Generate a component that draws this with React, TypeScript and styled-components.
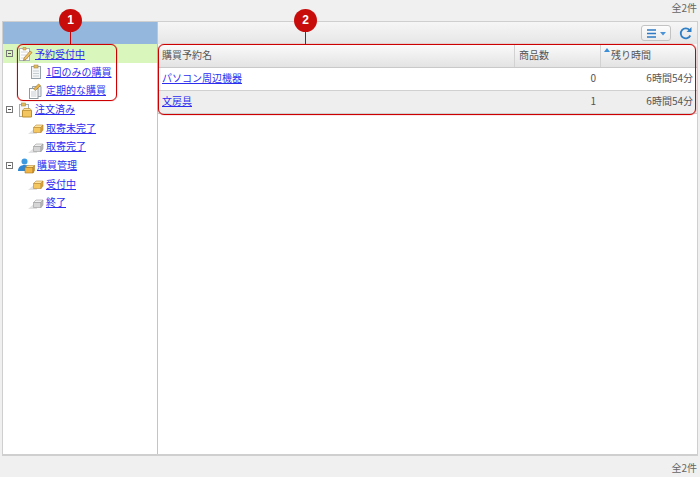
import { FC, ReactNode } from 'react';
import styled, { createGlobalStyle } from 'styled-components';

const GlobalStyle = createGlobalStyle`
  html, body {
    margin: 0;
    padding: 0;
    background: #f0f0f0;
  }
  body {
    font-family: 'Noto Sans CJK JP', 'Liberation Sans', sans-serif;
    font-size: 10px;
    color: #555;
  }
  a {
    color: #2d2df0;
    text-decoration: underline;
  }
`;

const Page = styled.div`
  position: relative;
  width: 700px;
  height: 477px;
  overflow: hidden;
  display: flex;
  flex-direction: column;
`;

const CountBar = styled.div<{ $height: number; $line: number }>`
  height: ${(p) => p.$height}px;
  line-height: ${(p) => p.$line}px;
  padding-right: 3px;
  text-align: right;
  color: #666;
  font-size: 10px;
`;

const Panel = styled.div`
  margin: 0 2px;
  height: 435px;
  box-sizing: border-box;
  border: 1px solid #cfcfcf;
  border-bottom-width: 2px;
  display: flex;
  background: #fff;
`;

const Sidebar = styled.div`
  width: 154px;
  flex: none;
  border-right: 1px solid #c4c4c4;
`;

const SidebarHead = styled.div`
  height: 22px;
  background: #94b7dd;
`;

const TreeList = styled.div`
  display: flex;
  flex-direction: column;
`;

const TreeRow = styled.div<{ $active?: boolean; $child?: boolean }>`
  height: ${(p) => (p.$active ? 19 : 18.65)}px;
  display: flex;
  align-items: center;
  padding-left: ${(p) => (p.$child ? 25 : 3)}px;
  background: ${(p) => (p.$active ? '#d9f6bd' : 'transparent')};
`;

const Toggle = styled.span`
  width: 7px;
  height: 7px;
  box-sizing: border-box;
  border: 1px solid #777;
  margin-right: 4px;
  flex: none;
  display: flex;
  align-items: center;
  justify-content: center;
  &::after {
    content: '';
    width: 3px;
    height: 1px;
    background: #555;
  }
`;

const IconBox = styled.span<{ $w: number }>`
  width: ${(p) => p.$w}px;
  height: 16px;
  flex: none;
  margin-right: 2px;
  display: block;
`;

const TreeLabel = styled.a<{ $active?: boolean }>`
  position: relative;
  top: ${(p) => (p.$active ? 0 : -1)}px;
`;

const Main = styled.div`
  flex: 1;
  display: flex;
  flex-direction: column;
  min-width: 0;
`;

const Toolbar = styled.div`
  height: 22px;
  flex: none;
  box-sizing: border-box;
  background: linear-gradient(#f6f6f6, #e6e6e6);
  display: flex;
  align-items: center;
  justify-content: flex-end;
  padding-right: 4px;
  gap: 7px;
`;

const MenuButton = styled.button`
  width: 30px;
  height: 16px;
  padding: 0 0 0 2px;
  border: 1px solid #c3c3c3;
  border-radius: 3px;
  background: linear-gradient(#fdfdfd, #ececec);
  display: flex;
  align-items: center;
  justify-content: center;
`;

const RefreshButton = styled.span`
  width: 15px;
  height: 15px;
  display: block;
`;

const Row = styled.div<{ $kind: 'head' | 'odd' | 'even' }>`
  display: grid;
  grid-template-columns: 357px 86px 1fr;
  height: ${(p) => (p.$kind === 'head' ? 24 : 23)}px;
  box-sizing: border-box;
  align-items: center;
  border-bottom: 1px solid ${(p) => (p.$kind === 'head' ? '#c9c9c9' : '#d0d0d0')};
  background: ${(p) =>
    p.$kind === 'head'
      ? 'linear-gradient(#fbfbfb, #e3e3e3)'
      : p.$kind === 'even'
        ? '#eeeeee'
        : '#fff'};
`;

const Cell = styled.div<{ $right?: boolean; $divider?: boolean; $sorted?: boolean; $endPad?: number }>`
  height: 100%;
  box-sizing: border-box;
  display: flex;
  align-items: center;
  padding: 0 ${(p) => p.$endPad ?? 4}px 3px ${(p) => (p.$sorted ? 10 : 4)}px;
  position: relative;
  justify-content: ${(p) => (p.$right ? 'flex-end' : 'flex-start')};
  border-right: ${(p) => (p.$divider ? '1px solid #d2d2d2' : 'none')};
  color: #555;
`;

const SortArrow = styled.span`
  position: absolute;
  left: 3px;
  top: 4px;
  width: 0;
  height: 0;
  border-left: 3.5px solid transparent;
  border-right: 3.5px solid transparent;
  border-bottom: 4px solid #3a8fd8;
`;

const Callout = styled.div<{ $x: number; $y: number; $w: number; $h: number }>`
  position: absolute;
  left: ${(p) => p.$x}px;
  top: ${(p) => p.$y}px;
  width: ${(p) => p.$w}px;
  height: ${(p) => p.$h}px;
  box-sizing: border-box;
  border: 1px solid #cc0000;
  box-shadow: 0 0 1px #cc0000;
  border-radius: 6px;
  pointer-events: none;
`;

const Badge = styled.div<{ $x: number }>`
  position: absolute;
  left: ${(p) => p.$x}px;
  top: 9px;
  width: 23px;
  height: 23px;
  border-radius: 50%;
  background: #c80c0c;
  color: #fff;
  font-family: 'Liberation Sans', sans-serif;
  font-weight: bold;
  font-size: 12px;
  line-height: 23px;
  text-align: center;
  &::after {
    content: '';
    position: absolute;
    left: 11px;
    top: 23px;
    width: 1px;
    height: 12px;
    background: #cc0000;
  }
`;

const NoteIcon: FC = () => (
  <svg width="16" height="16" viewBox="0 0 16 16">
    <rect x="2.5" y="2.5" width="10" height="12" fill="#fff" stroke="#aab2b8" />
    <path d="M4 6h7M4 9h5M4 12h7" stroke="#d2d6d9" />
    <path d="M6 4V1.5h3V4z" fill="#e9bf5c" stroke="#b98f30" strokeWidth=".6" />
    <path d="M7 12l6-7 2 1.500-6 7-2.500 1z" fill="#f0c060" stroke="#8f6a2a" strokeWidth=".6" />
  </svg>
);

const ClipIcon: FC = () => (
  <svg width="16" height="16" viewBox="0 0 16 16">
    <rect x="3.500" y="2.500" width="9" height="12" fill="#f4f6f7" stroke="#97a3aa" />
    <path d="M5 7h6M5 9.500h6M5 12h6" stroke="#c7ced2" />
    <rect x="6" y="1" width="4" height="3" fill="#e3bd62" stroke="#a98a3c" strokeWidth=".6" />
  </svg>
);

const RegularIcon: FC = () => (
  <svg width="16" height="16" viewBox="0 0 16 16">
    <path d="M4.500 3.500h8.500v10H4.500z" fill="#e8eaec" stroke="#9aa4ab" />
    <rect x="1.500" y="5.500" width="8.500" height="10" fill="#fff" stroke="#8f9aa1" />
    <path d="M3 9h5.500M3 11h5.500M3 13h5.500" stroke="#c4cbd0" />
    <path d="M5.500 6l5-5 2 1.500-5 5z" fill="#e9b44c" stroke="#9a7326" strokeWidth=".6" />
  </svg>
);

const OrderedIcon: FC = () => (
  <svg width="16" height="16" viewBox="0 0 16 16">
    <rect x="2.500" y="2.500" width="9" height="12" fill="#f6f7f8" stroke="#a3adb3" />
    <rect x="4.500" y="1" width="4" height="3" fill="#e3bd62" stroke="#a98a3c" strokeWidth=".6" />
    <path d="M5.500 8.500h9V15h-9z" fill="#f3c55f" stroke="#bd8f2e" />
    <path d="M5.500 8.500l1.500-2h6l1.500 2z" fill="#fbe09a" stroke="#bd8f2e" strokeWidth=".7" />
  </svg>
);

const BoxIcon: FC<{ $done?: boolean }> = ({ $done }) => {
  const [top, front, side, line] = $done
    ? ['#eeeeee', '#d6d6d6', '#bdbdbd', '#9a9a9a']
    : ['#fde3a0', '#f5c760', '#dfa23a', '#b98a30'];
  return (
    <svg width="16" height="16" viewBox="0 0 16 16">
      <path d="M0 14l7-6h2v6z" fill="#e2e2e2" />
      <path d="M5.500 7.500h7.500l2-2.500H8z" fill={top} stroke={line} strokeWidth=".6" />
      <path d="M5.500 7.500h7.500v5H5.500z" fill={front} stroke={line} strokeWidth=".6" />
      <path d="M13 7.500l2-2.500v5l-2 2.500z" fill={side} stroke={line} strokeWidth=".6" />
    </svg>
  );
};

const ManageIcon: FC = () => (
  <svg width="18" height="16" viewBox="0 0 18 16">
    <circle cx="7.500" cy="3.500" r="3" fill="#3d9ae0" />
    <path d="M1 13c0-4 3-6 6.500-6S13 8 13 10v3z" fill="#2f86d2" />
    <path d="M8 9.500h8l1.500-2h-7z" fill="#fbdc8c" stroke="#a9771f" strokeWidth=".5" />
    <path d="M8 9.500h8V15H8z" fill="#f0b545" stroke="#a9771f" strokeWidth=".6" />
    <path d="M16 9.500l1.500-2v5L16 15z" fill="#d5962c" stroke="#a9771f" strokeWidth=".5" />
  </svg>
);

const MenuGlyph: FC = () => (
  <svg width="21" height="9" viewBox="0 0 21 9">
    <path d="M0 1h9M0 4.500h9M0 8h9" stroke="#2f79c4" strokeWidth="1.400" />
    <path d="M13 3h6l-3 3.500z" fill="#4a93d6" />
  </svg>
);

const RefreshGlyph: FC = () => (
  <svg width="15" height="15" viewBox="0 0 15 15">
    <path d="M12.300 9.500A5 5 0 1 1 11.500 4" fill="none" stroke="#2f7fc6" strokeWidth="1.800" />
    <path d="M13.500 1v5h-5z" fill="#2f7fc6" />
  </svg>
);

type TreeEntry = {
  label: string;
  icon: ReactNode;
  width: number;
  child?: boolean;
  active?: boolean;
};

const tree: TreeEntry[] = [
  { label: '予約受付中', icon: <NoteIcon />, width: 16, active: true },
  { label: '1回のみの購買', icon: <ClipIcon />, width: 16, child: true },
  { label: '定期的な購買', icon: <RegularIcon />, width: 16, child: true },
  { label: '注文済み', icon: <OrderedIcon />, width: 16 },
  { label: '取寄未完了', icon: <BoxIcon />, width: 16, child: true },
  { label: '取寄完了', icon: <BoxIcon $done />, width: 16, child: true },
  { label: '購買管理', icon: <ManageIcon />, width: 18 },
  { label: '受付中', icon: <BoxIcon />, width: 16, child: true },
  { label: '終了', icon: <BoxIcon $done />, width: 16, child: true },
];

export default function App() {
  return (
    <Page>
      <GlobalStyle />
      <CountBar $height={21} $line={15}>全2件</CountBar>
      <Panel>
        <Sidebar>
          <SidebarHead />
          <TreeList>
            {tree.map((item) => (
              <TreeRow key={item.label} $active={item.active} $child={item.child}>
                {!item.child && <Toggle />}
                <IconBox $w={item.width}>{item.icon}</IconBox>
                <TreeLabel href="#" $active={item.active}>{item.label}</TreeLabel>
              </TreeRow>
            ))}
          </TreeList>
        </Sidebar>
        <Main>
          <Toolbar>
            <MenuButton>
              <MenuGlyph />
            </MenuButton>
            <RefreshButton>
              <RefreshGlyph />
            </RefreshButton>
          </Toolbar>
          <Row $kind="head">
            <Cell $divider>購買予約名</Cell>
            <Cell $divider>商品数</Cell>
            <Cell $sorted>
              <SortArrow />
              残り時間
            </Cell>
          </Row>
          <Row $kind="odd">
            <Cell>
              <a href="#">パソコン周辺機器</a>
            </Cell>
            <Cell $right $endPad={5}>0</Cell>
            <Cell $right>6時間54分</Cell>
          </Row>
          <Row $kind="even">
            <Cell>
              <a href="#">文房具</a>
            </Cell>
            <Cell $right $endPad={5}>1</Cell>
            <Cell $right>6時間54分</Cell>
          </Row>
        </Main>
      </Panel>
      <CountBar $height={21} $line={23}>全2件</CountBar>

      <Callout $x={17} $y={44} $w={100} $h={57} />
      <Callout $x={158} $y={44} $w={538} $h={71} />
      <Badge $x={59}>1</Badge>
      <Badge $x={294}>2</Badge>
    </Page>
  );
}
